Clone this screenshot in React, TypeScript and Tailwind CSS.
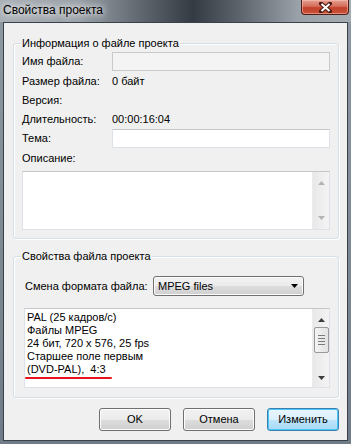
import * as React from "react";

function Group({
  title,
  className,
  children,
}: {
  title: string;
  className: string;
  children: React.ReactNode;
}) {
  return (
    <div
      className={`relative ml-[9px] w-[326px] rounded-[3px] border border-[#d5dfe5] shadow-[inset_1px_1px_0_#fff,1px_1px_0_#fff] ${className}`}
    >
      <span className="absolute left-[7px] top-[-8px] bg-[#f0f0f0] px-[1px] leading-[14px]">
        {title}
      </span>
      {children}
    </div>
  );
}

function Arrow({ up, color }: { up?: boolean; color: string }) {
  return (
    <svg width="7" height="4" viewBox="0 0 7 4">
      <path d={up ? "M0 4 L3.5 0 L7 4 Z" : "M0 0 L7 0 L3.5 4 Z"} fill={color} />
    </svg>
  );
}

function Row({
  label,
  h,
  children,
}: {
  label: string;
  h: string;
  children?: React.ReactNode;
}) {
  return (
    <div className={`flex items-center ${h}`}>
      <span className="w-[90px] shrink-0 leading-[13px]">{label}</span>
      {children}
    </div>
  );
}

function Button({ label, focused }: { label: string; focused?: boolean }) {
  return (
    <button
      className={
        focused
          ? "flex h-[23px] w-[72px] items-center justify-center rounded-[3px] border border-[#3c7fb1] bg-[linear-gradient(to_bottom,#eaf6fd_0%,#d9f0fc_50%,#bee6fd_51%,#a7d9f5_100%)] leading-[13px] shadow-[inset_0_0_0_1px_#48c6f5]"
          : "flex h-[23px] w-[72px] items-center justify-center rounded-[3px] border border-[#707070] bg-[linear-gradient(to_bottom,#f2f2f2_0%,#ebebeb_50%,#dddddd_51%,#cfcfcf_100%)] leading-[13px] shadow-[inset_0_0_0_1px_#fcfcfc]"
      }
    >
      {label}
    </button>
  );
}

export default function App() {
  return (
    <div className="flex h-[444px] w-[351px] flex-col overflow-hidden bg-[linear-gradient(to_bottom,#8f99a3,#6f7b86)] font-['Liberation_Sans',Arial,sans-serif] text-[11px] text-black">
      {/* Title bar */}
      <div className="flex h-[22px] shrink-0 items-start justify-between bg-[linear-gradient(to_right,#a9b0b6_0%,#9aa1a8_22%,#5a6169_42%,#353b43_55%,#5c636b_68%,#9aa1a8_85%,#a4abb1_100%)]">
        <span className="pl-[3px] pt-[2px] text-[12px] leading-[16px] [text-shadow:0_0_6px_#fff,0_0_10px_rgba(255,255,255,0.9)]">
          Свойства проекта
        </span>
        <div className="mr-[2px] flex h-[15px] w-[48px] items-center justify-center rounded-b-[4px] border border-t-0 border-[#4e1d16] bg-[linear-gradient(to_bottom,#e6a091_0%,#d46d5a_45%,#c2412a_55%,#c9533a_100%)] shadow-[inset_0_0_0_1px_rgba(255,200,190,0.5)]">
          <svg width="13" height="11" viewBox="0 0 13 11">
            <path d="M2 1.5 L11 9.5 M11 1.5 L2 9.5" stroke="#4a1c14" strokeWidth="4" strokeLinecap="square" />
            <path d="M2.5 2 L10.5 9 M10.5 2 L2.5 9" stroke="#fff" strokeWidth="2" />
          </svg>
        </div>
      </div>

      {/* Client area */}
      <div className="flex flex-1 px-[3px] pb-[3px]">
        <div className="flex flex-1 flex-col border border-[#39414a] bg-[#f0f0f0]">
          <Group title="Информация о файле проекта" className="mt-[20px] px-[8px] pb-[8px] pt-[8px]">
            <Row label="Имя файла:" h="h-[19px]">
              <div className="h-[19px] flex-1 border border-[#c9c9c9] bg-[#f4f4f4]" />
            </Row>
            <Row label="Размер файла:" h="h-[20px]">
              <span className="leading-[13px]">0 байт</span>
            </Row>
            <Row label="Версия:" h="h-[19px]" />
            <Row label="Длительность:" h="h-[19px]">
              <span className="leading-[13px]">00:00:16:04</span>
            </Row>
            <Row label="Тема:" h="h-[19px]">
              <div className="h-[19px] flex-1 border border-[#dde2e8] border-t-[#c3c7cc] bg-white" />
            </Row>
            <div className="flex h-[21px] items-center leading-[13px]">Описание:</div>
            <div className="mt-[2px] flex h-[59px] border border-[#dde2e8] border-t-[#c3c7cc] bg-white">
              <div className="flex-1" />
              <div className="flex w-[17px] flex-col items-center justify-between border-l border-[#ececec] bg-[linear-gradient(to_right,#e8e8e8,#f4f4f4)] py-[9px]">
                <Arrow up color="#b4b4b4" />
                <Arrow color="#b4b4b4" />
              </div>
            </div>
          </Group>

          <Group title="Свойства файла проекта" className="mt-[17px] pb-[9px] pl-[10px] pr-[8px] pt-[19px]">
            <div className="flex h-[20px] items-center">
              <span className="w-[129px] shrink-0 pl-[1px] leading-[13px]">Смена формата файла:</span>
              <div className="flex h-[20px] w-[151px] items-center justify-between rounded-[3px] border border-[#707070] bg-[linear-gradient(to_bottom,#f2f2f2_0%,#ebebeb_50%,#dddddd_51%,#cfcfcf_100%)] pl-[4px] pr-[5px] shadow-[inset_0_0_0_1px_#fcfcfc]">
                <span className="leading-[13px]">MPEG files</span>
                <Arrow color="#000" />
              </div>
            </div>
            <div className="mt-[12px] flex h-[80px] border border-[#dde2e8] border-t-[#c3c7cc] bg-white">
              <div className="flex-1 pl-[2px] pt-[2px] leading-[13px]">
                <div>PAL (25 кадров/с)</div>
                <div>Файлы MPEG</div>
                <div>24 бит, 720 x 576, 25 fps</div>
                <div>Старшее поле первым</div>
                <div className="whitespace-pre">(DVD-PAL),  4:3</div>
                <div className="ml-[-2px] mt-[1px] h-[2px] w-[87px] rounded-full bg-[#e8141b]" />
              </div>
              <div className="flex w-[17px] flex-col items-center border-l border-[#ececec] bg-[linear-gradient(to_right,#e8e8e8,#f4f4f4)] pb-[7px] pt-[9px]">
                <Arrow up color="#3c3c3c" />
                <div className="mt-[5px] flex h-[26px] w-[15px] flex-col items-center justify-center gap-[2px] rounded-[2px] border border-[#9a9a9a] bg-[linear-gradient(to_right,#f4f4f4,#e2e2e2)]">
                  <div className="h-[1px] w-[7px] bg-[#7a7a7a]" />
                  <div className="h-[1px] w-[7px] bg-[#7a7a7a]" />
                  <div className="h-[1px] w-[7px] bg-[#7a7a7a]" />
                  <div className="h-[1px] w-[7px] bg-[#7a7a7a]" />
                </div>
                <div className="flex-1" />
                <Arrow color="#3c3c3c" />
              </div>
            </div>
          </Group>

          <div className="mt-[10px] flex justify-end gap-[12px] pr-[8px]">
            <Button label="OK" />
            <Button label="Отмена" />
            <Button label="Изменить" focused />
          </div>
        </div>
      </div>
    </div>
  );
}
